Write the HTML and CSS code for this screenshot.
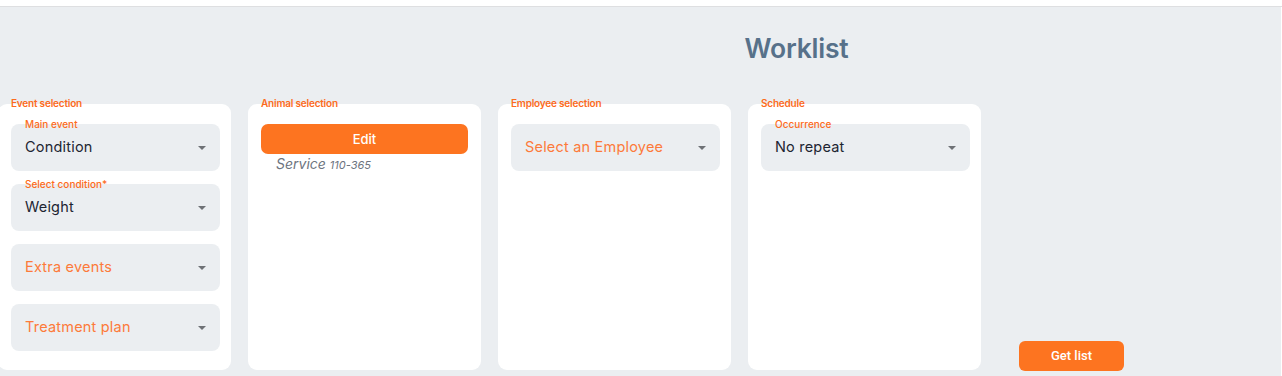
FILE: index.html
```html
<!DOCTYPE html>
<html lang="en">
<head>
  <meta charset="UTF-8">
  <meta name="viewport" content="width=device-width, initial-scale=1.0">
  <title>Worklist</title>
  <link rel="stylesheet" href="styles.css">
</head>
<body>

  <div class="topbar"></div>

  <div class="page">
    <div class="header">
      <h1>Worklist</h1>
    </div>

    <div class="cards">
      <div class="card">
        <span class="card-label">Event selection</span>
        <div class="field">
          <span class="field-label">Main event</span>
          <span class="value">Condition</span>
          <span class="caret"></span>
        </div>
        <div class="field">
          <span class="field-label">Select condition*</span>
          <span class="value">Weight</span>
          <span class="caret"></span>
        </div>
        <div class="field">
          <span class="value placeholder">Extra events</span>
          <span class="caret"></span>
        </div>
        <div class="field">
          <span class="value placeholder">Treatment plan</span>
          <span class="caret"></span>
        </div>
      </div>

      <div class="card">
        <span class="card-label">Animal selection</span>
        <button class="btn edit">Edit</button>
        <div class="service">Service <small>110-365</small></div>
      </div>

      <div class="card">
        <span class="card-label">Employee selection</span>
        <div class="field">
          <span class="value placeholder">Select an Employee</span>
          <span class="caret"></span>
        </div>
      </div>

      <div class="card">
        <span class="card-label">Schedule</span>
        <div class="field">
          <span class="field-label">Occurrence</span>
          <span class="value">No repeat</span>
          <span class="caret"></span>
        </div>
      </div>

      <button class="btn get-list">Get list</button>
    </div>
  </div>

</body>
</html>
```

FILE: styles.css
```css
* {
  margin: 0;
  padding: 0;
  box-sizing: border-box;
  font-family: Inter, "Open Sans", sans-serif;
}

body {
  background-color: white;
  height: 376px;
  overflow: hidden;
}

.topbar {
  height: 7px;
  border-bottom: 1px solid #dedfe1;
}

.page {
  background-color: #ebeef1;
  height: 369px;
  width: 1281px;
}

.header {
  margin-left: 312px;
  padding-top: 25px;
  height: 97px;
  text-align: center;
}

.header h1 {
  font-size: 26.5px;
  font-weight: 600;
  color: #57718a;
  letter-spacing: -0.2px;
}

.cards {
  display: flex;
  align-items: flex-end;
  gap: 17px;
  margin-left: -2px;
}

.card {
  position: relative;
  width: 233px;
  height: 266px;
  background-color: white;
  border-radius: 9px;
  padding: 20px 11px 19px 13px;
  display: flex;
  flex-direction: column;
  gap: 13px;
}

.card-label {
  position: absolute;
  top: -7px;
  left: 13px;
  font-size: 10px;
  font-weight: 600;
  letter-spacing: -0.2px;
  color: #fd6b1c;
}

.field {
  position: relative;
  height: 47px;
  background-color: #ebeef1;
  border-radius: 8px;
  display: flex;
  align-items: center;
  padding: 0 14px 2px;
}

.field-label {
  position: absolute;
  top: -6px;
  left: 14px;
  font-size: 10px;
  font-weight: 500;
  color: #fd6b1c;
}

.value {
  flex-grow: 1;
  font-size: 14.5px;
  letter-spacing: 0.2px;
  color: #1d2532;
}

.value.placeholder {
  color: #fd7a3a;
}

.caret {
  width: 0;
  height: 0;
  margin-top: 2px;
  border-left: 4.5px solid transparent;
  border-right: 4.5px solid transparent;
  border-top: 4.5px solid #6e7176;
}

.btn {
  height: 30px;
  border: none;
  border-radius: 7px;
  background-color: #fd7420;
  color: white;
  font-size: 13px;
  cursor: pointer;
}

.btn.edit {
  width: 207px;
  font-weight: 500;
}

.service {
  margin-top: -12px;
  padding-left: 15px;
  font-size: 14px;
  font-style: italic;
  color: #6d7480;
}

.service small {
  font-size: 11px;
}

.btn.get-list {
  width: 105px;
  margin-left: 21px;
  margin-bottom: -1px;
  border-radius: 6px;
  padding-bottom: 1px;
  font-family: Roboto, sans-serif;
  font-weight: 500;
}
```
